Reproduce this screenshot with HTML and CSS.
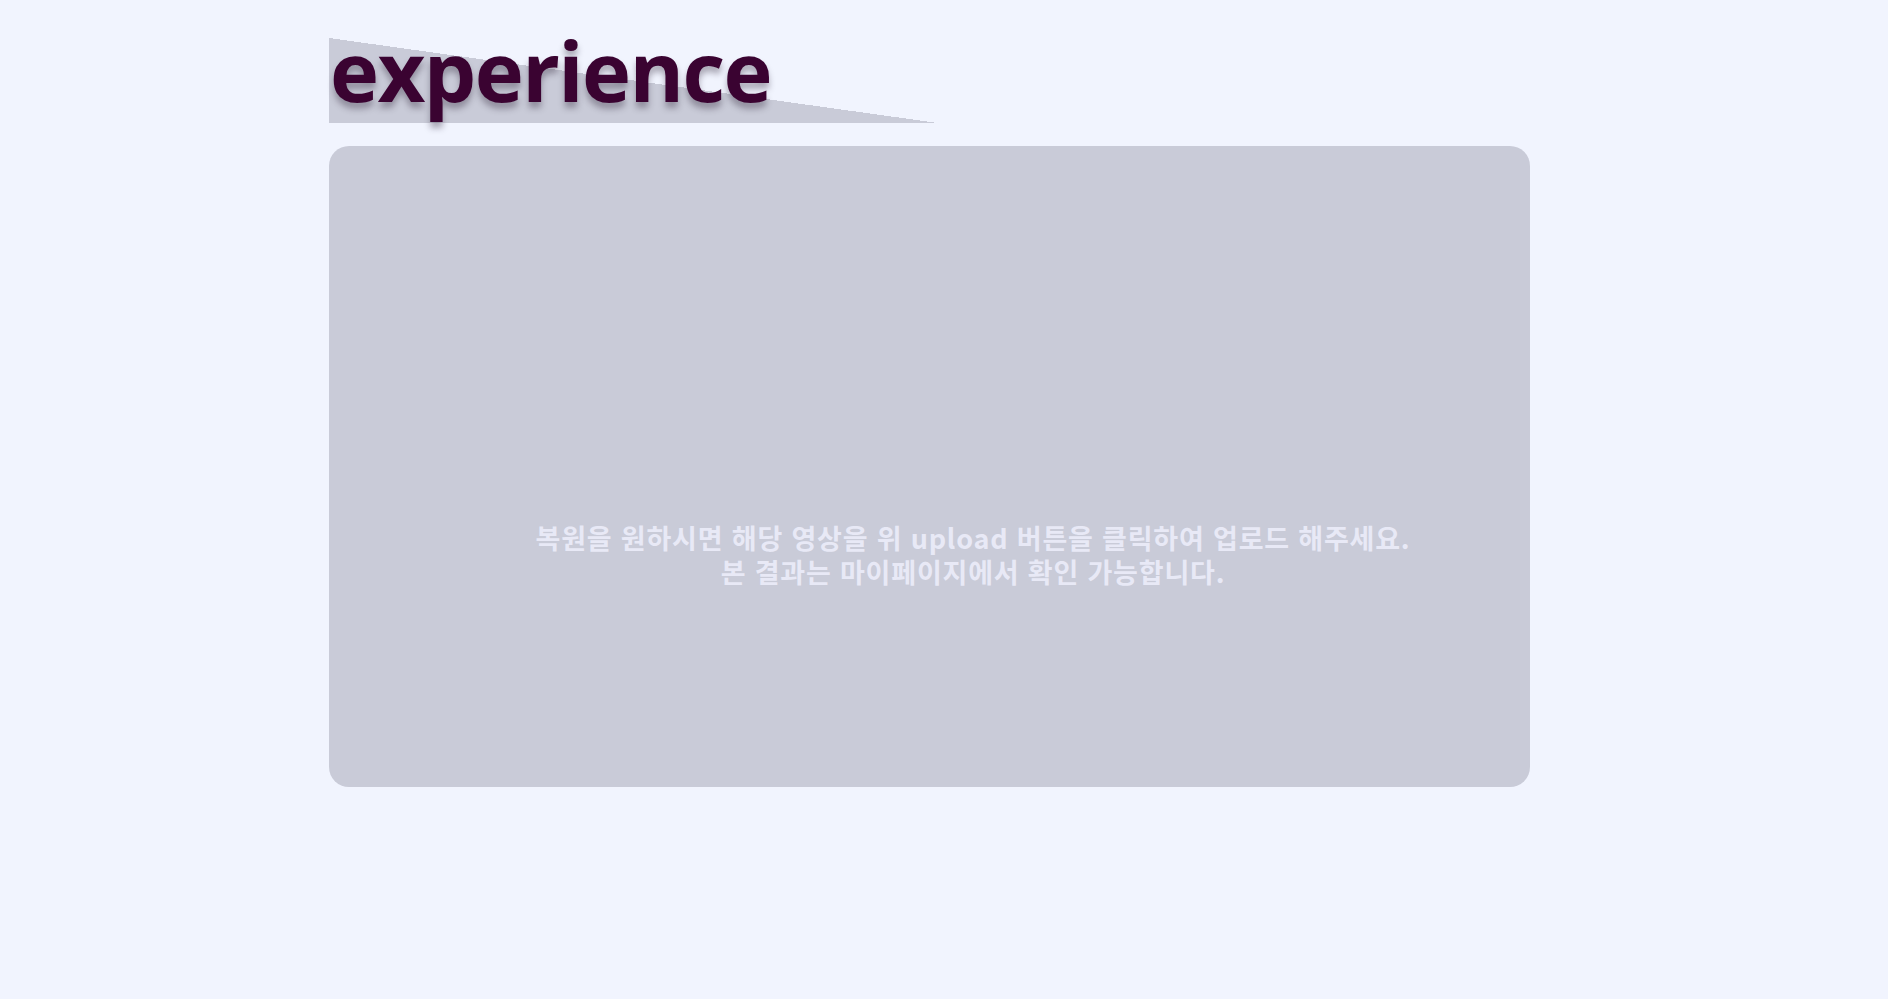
FILE: index.html
```html
<!DOCTYPE html>
<html lang="ko">
<head>
<meta charset="utf-8">
<title>experience</title>
<link rel="stylesheet" href="styles.css">
</head>
<body>
<main class="page">
  <header class="title-band">
    <h1 class="title">experience</h1>
  </header>
  <section class="viewer">
    <p class="notice">복원을 원하시면 해당 영상을 위 upload 버튼을 클릭하여 업로드 해주세요.<br>본 결과는 마이페이지에서 확인 가능합니다.</p>
  </section>
</main>
</body>
</html>
```

FILE: styles.css
```css
html, body {
  margin: 0;
  padding: 0;
  background: #f1f4fe;
  height: 100%;
}

.page {
  padding: 38px 0 0 329px;
  width: 1201px;
  font-family: "Open Sans", "Noto Sans", sans-serif;
}

.title-band {
  width: 609px;
  height: 85px;
  background: linear-gradient(to bottom left, transparent 50%, #c9cbd8 50%);
}

.title {
  margin: 0;
  padding-left: 1px;
  font-size: 83px;
  font-weight: 700;
  line-height: 64px;
  color: #3a0331;
  text-shadow: 0 6px 6px rgba(40, 30, 50, 0.35);
  letter-spacing: -1.6px;
}

.viewer {
  margin-top: 23px;
  height: 641px;
  border-radius: 20px;
  background: #c9cbd8;
  display: flex;
  align-items: center;
  justify-content: center;
  padding-left: 87px;
  padding-top: 177px;
  box-sizing: border-box;
}

.notice {
  margin: 0;
  text-align: center;
  font-family: "Noto Sans CJK KR", "Noto Sans", sans-serif;
  font-size: 27px;
  font-weight: 700;
  line-height: 34px;
  letter-spacing: 0.8px;
  color: #e8e9f6;
}
```
